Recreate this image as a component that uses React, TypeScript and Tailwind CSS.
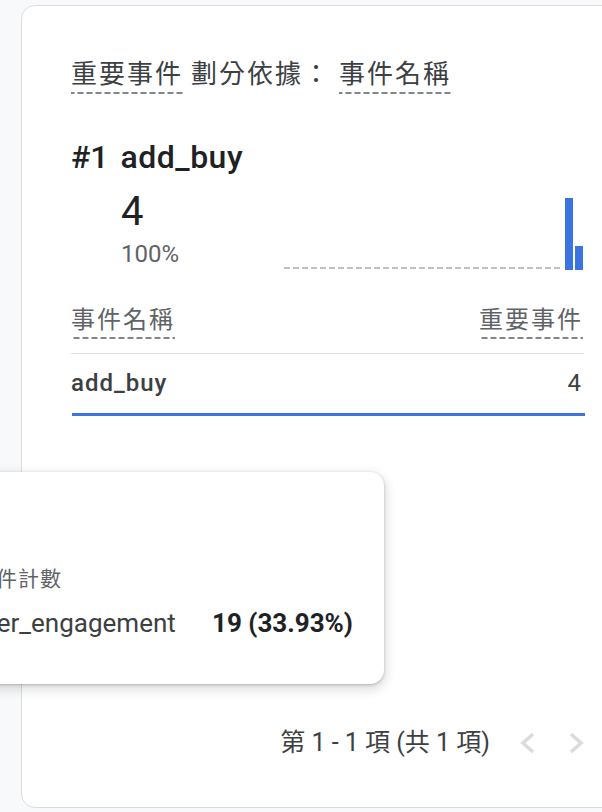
import React from 'react';

const FONT = "font-['Roboto','Noto_Sans_CJK_TC',sans-serif]";
const DASHED =
  'bg-[linear-gradient(to_right,#80868b_66%,transparent_0)] bg-[length:9px_2px] bg-repeat-x bg-bottom';

function Chevron({ dir }: { dir: 'left' | 'right' }) {
  return (
    <svg width="16" height="22" viewBox="0 0 16 22" fill="none">
      <polyline
        points={dir === 'left' ? '13,2 3,11 13,20' : '3,2 13,11 3,20'}
        stroke="#dadce0"
        strokeWidth="3.5"
      />
    </svg>
  );
}

function Sparkline() {
  // dashed baseline + two bars at the end
  return (
    <svg width="300" height="72" viewBox="0 0 300 72" className="block">
      <line x1="0" y1="70" x2="279" y2="70" stroke="#bdc1c6" strokeWidth="2" strokeDasharray="6 3" />
      <rect x="281" y="0" width="8" height="72" fill="#3b73e0" />
      <rect x="291" y="48" width="8" height="24" fill="#3b73e0" />
    </svg>
  );
}

export default function App() {
  return (
    <div className={`relative h-[812px] w-[602px] overflow-hidden bg-[#f8f9fa] ${FONT}`}>
      {/* main card, runs off the right edge */}
      <div className="ml-[21px] mt-[5px] h-[803px] w-[640px] rounded-[14px] border border-[#dadce0] bg-white pl-[49px] pt-[51px]">
        <div className="w-[513px]">
          <h2 className="flex items-end text-[26px] leading-[34px] tracking-[2px] text-[#3c4043]">
            <span className={`pb-[3px] ${DASHED}`}>重要事件</span>
            <span className="ml-[8px] pb-[3px]">劃分依據：</span>
            <span className={`ml-[8px] pb-[3px] ${DASHED}`}>事件名稱</span>
          </h2>

          <div className="mt-[43px] flex items-baseline text-[32px] font-medium leading-[40px] text-[#202124]">
            <span>#1</span>
            <span className="ml-[12px] tracking-[0.5px]">add_buy</span>
          </div>

          <div className="mt-[13px] flex items-end justify-between">
            <div className="pb-[2px] pl-[50px]">
              <div className="text-[40px] leading-[44px] text-[#202124]">4</div>
              <div className="mt-[6px] text-[24px] leading-[28px] text-[#5f6368]">100%</div>
            </div>
            <Sparkline />
          </div>

          <div className="mt-[35px] flex items-end justify-between border-b border-[#dadce0] pb-[14px] pr-[3px] text-[24px] leading-[30px] tracking-[2px] text-[#5f6368]">
            <span className={`pb-[4px] ${DASHED}`}>事件名稱</span>
            <span className={`-mr-[2px] pb-[4px] ${DASHED}`}>重要事件</span>
          </div>

          <div className="flex h-[58px] items-center justify-between pr-[3px] text-[24px] text-[#3c4043]">
            <span className="font-medium tracking-[1px]">add_buy</span>
            <span>4</span>
          </div>

          <div className="ml-[1px] mt-[1px] h-[3px] w-[513px] bg-[#3b73e0]" />
        </div>

        <div className="mt-[311px] flex w-[513px] items-center justify-end text-[25px] leading-[32px] text-[#3c4043]">
          <span>第 1 - 1 項 (共 1 項)</span>
          <div className="ml-[30px] flex items-center gap-[32px]">
            <Chevron dir="left" />
            <Chevron dir="right" />
          </div>
        </div>
      </div>

      {/* hover tooltip lying over the card */}
      <div className="absolute left-[-55px] top-[472px] h-[212px] w-[439px] rounded-[14px] bg-white pl-[24px] pt-[93px] shadow-[0_1px_3px_rgba(60,64,67,0.3),0_4px_10px_3px_rgba(60,64,67,0.15)]">
        <div className="ml-[5px] text-[21px] leading-[28px] tracking-[1px] text-[#5f6368]">事件計數</div>
        <div className="mt-[15px] flex items-center text-[26px] leading-[30px] text-[#3c4043]">
          <span className="w-[243px]">user_engagement</span>
          <span className="font-bold text-[#202124]">19 (33.93%)</span>
        </div>
      </div>
    </div>
  );
}
